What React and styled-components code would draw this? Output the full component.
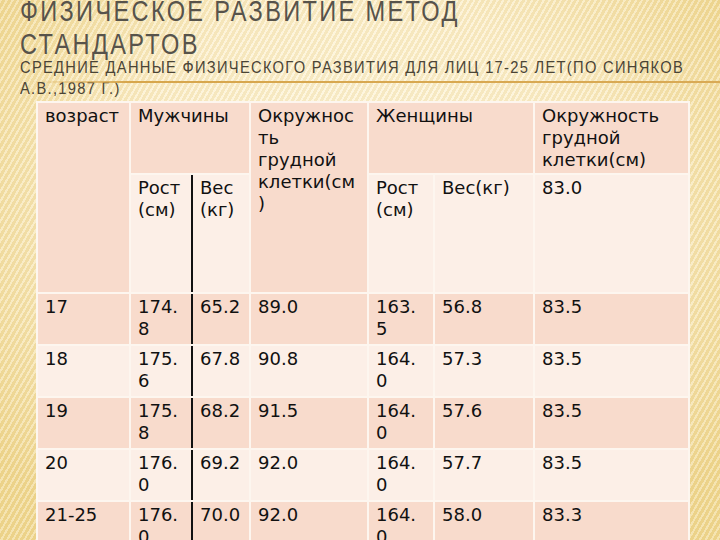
import React from 'react'
import styled, { createGlobalStyle } from 'styled-components'

const Global = createGlobalStyle`
  html, body {
    margin: 0;
    padding: 0;
  }
  body {
    width: 720px;
    height: 540px;
    overflow: hidden;
  }
`

const Page = styled.div`
  position: relative;
  width: 720px;
  height: 540px;
  overflow: hidden;
  background:
    repeating-linear-gradient(120deg, rgba(255,255,255,0.28) 0 2px, rgba(190,150,50,0.10) 2px 5px),
    radial-gradient(ellipse 62% 75% at 50% 40%, #fdf6dc 0%, #fcefcb 55%, #f1d993 100%);
  font-family: "Liberation Sans", Arial, sans-serif;
`

const Header = styled.header`
  position: relative;
  display: flow-root;
  padding-left: 20px;

  /* golden rule that runs across the second subtitle line */
  &::after {
    content: '';
    position: absolute;
    left: 30px;
    right: 0;
    top: 81px;
    height: 2px;
    background: linear-gradient(90deg, rgba(214,165,70,0) 0%, #d7a64c 14%, #d9aa55 100%);
  }
`

const Title = styled.h1`
  margin: -6px 0 0;
  font-weight: normal;
  font-size: 30px;
  line-height: 33px;
  letter-spacing: 3px;
  color: #57534b;
  white-space: nowrap;
  transform: scaleX(0.785);
  transform-origin: left center;
`

const Subtitle = styled.h2`
  margin: -3px 0 0;
  font-weight: normal;
  font-size: 17px;
  line-height: 21px;
  letter-spacing: 1.5px;
  color: #4a4436;
  white-space: nowrap;
  transform: scaleX(0.864);
  transform-origin: left center;
`

const Table = styled.table`
  margin: 2px 0 0 36px;
  width: 652px;
  table-layout: fixed;
  border-collapse: collapse;
  font-family: "DejaVu Sans", Verdana, sans-serif;
  font-size: 18px;
  line-height: 22px;
  color: #111;
`

const Row = styled.tr`
  height: ${p => p.$h}px;
`

const Cell = styled.td`
  vertical-align: top;
  padding: 2px 7px;
  border: 2px solid #fdf6ef;
  overflow-wrap: anywhere;
  background: ${p => (p.$dark ? '#f8dbcc' : '#fcefe7')};
  ${p => p.$split && 'border-right-color: #111;'}
`

const widths = [93, 62, 58, 118, 66, 100, 155]

const data = [
  ['17', '174.8', '65.2', '89.0', '163.5', '56.8', '83.5'],
  ['18', '175.6', '67.8', '90.8', '164.0', '57.3', '83.5'],
  ['19', '175.8', '68.2', '91.5', '164.0', '57.6', '83.5'],
  ['20', '176.0', '69.2', '92.0', '164.0', '57.7', '83.5'],
  ['21-25', '176.0', '70.0', '92.0', '164.0', '58.0', '83.3'],
]

export default function App() {
  return (
    <Page>
      <Global />
      <Header>
        <Title>
          ФИЗИЧЕСКОЕ РАЗВИТИЕ МЕТОД
          <br />
          СТАНДАРТОВ
        </Title>
        <Subtitle>
          СРЕДНИЕ ДАННЫЕ ФИЗИЧЕСКОГО РАЗВИТИЯ ДЛЯ ЛИЦ 17-25 ЛЕТ(ПО СИНЯКОВ
          <br />
          А.В.,1987 Г.)
        </Subtitle>
      </Header>
      <Table>
        <colgroup>
          {widths.map((w, i) => (
            <col key={i} style={{ width: w }} />
          ))}
        </colgroup>
        <tbody>
          <Row $h={71}>
            <Cell $dark rowSpan={2}>возраст</Cell>
            <Cell $dark colSpan={2}>Мужчины</Cell>
            <Cell $dark rowSpan={2}>Окружность грудной клетки(см)</Cell>
            <Cell $dark colSpan={2}>Женщины</Cell>
            <Cell $dark>Окружность грудной клетки(см)</Cell>
          </Row>
          <Row $h={119}>
            <Cell $split>Рост (см)</Cell>
            <Cell>Вес (кг)</Cell>
            <Cell>Рост (см)</Cell>
            <Cell>Вес(кг)</Cell>
            <Cell>83.0</Cell>
          </Row>
          {data.map((r, i) => (
            <Row key={r[0]} $h={52}>
              {r.map((v, j) => (
                <Cell key={j} $dark={i % 2 === 0} $split={j === 1}>
                  {v}
                </Cell>
              ))}
            </Row>
          ))}
        </tbody>
      </Table>
    </Page>
  )
}
